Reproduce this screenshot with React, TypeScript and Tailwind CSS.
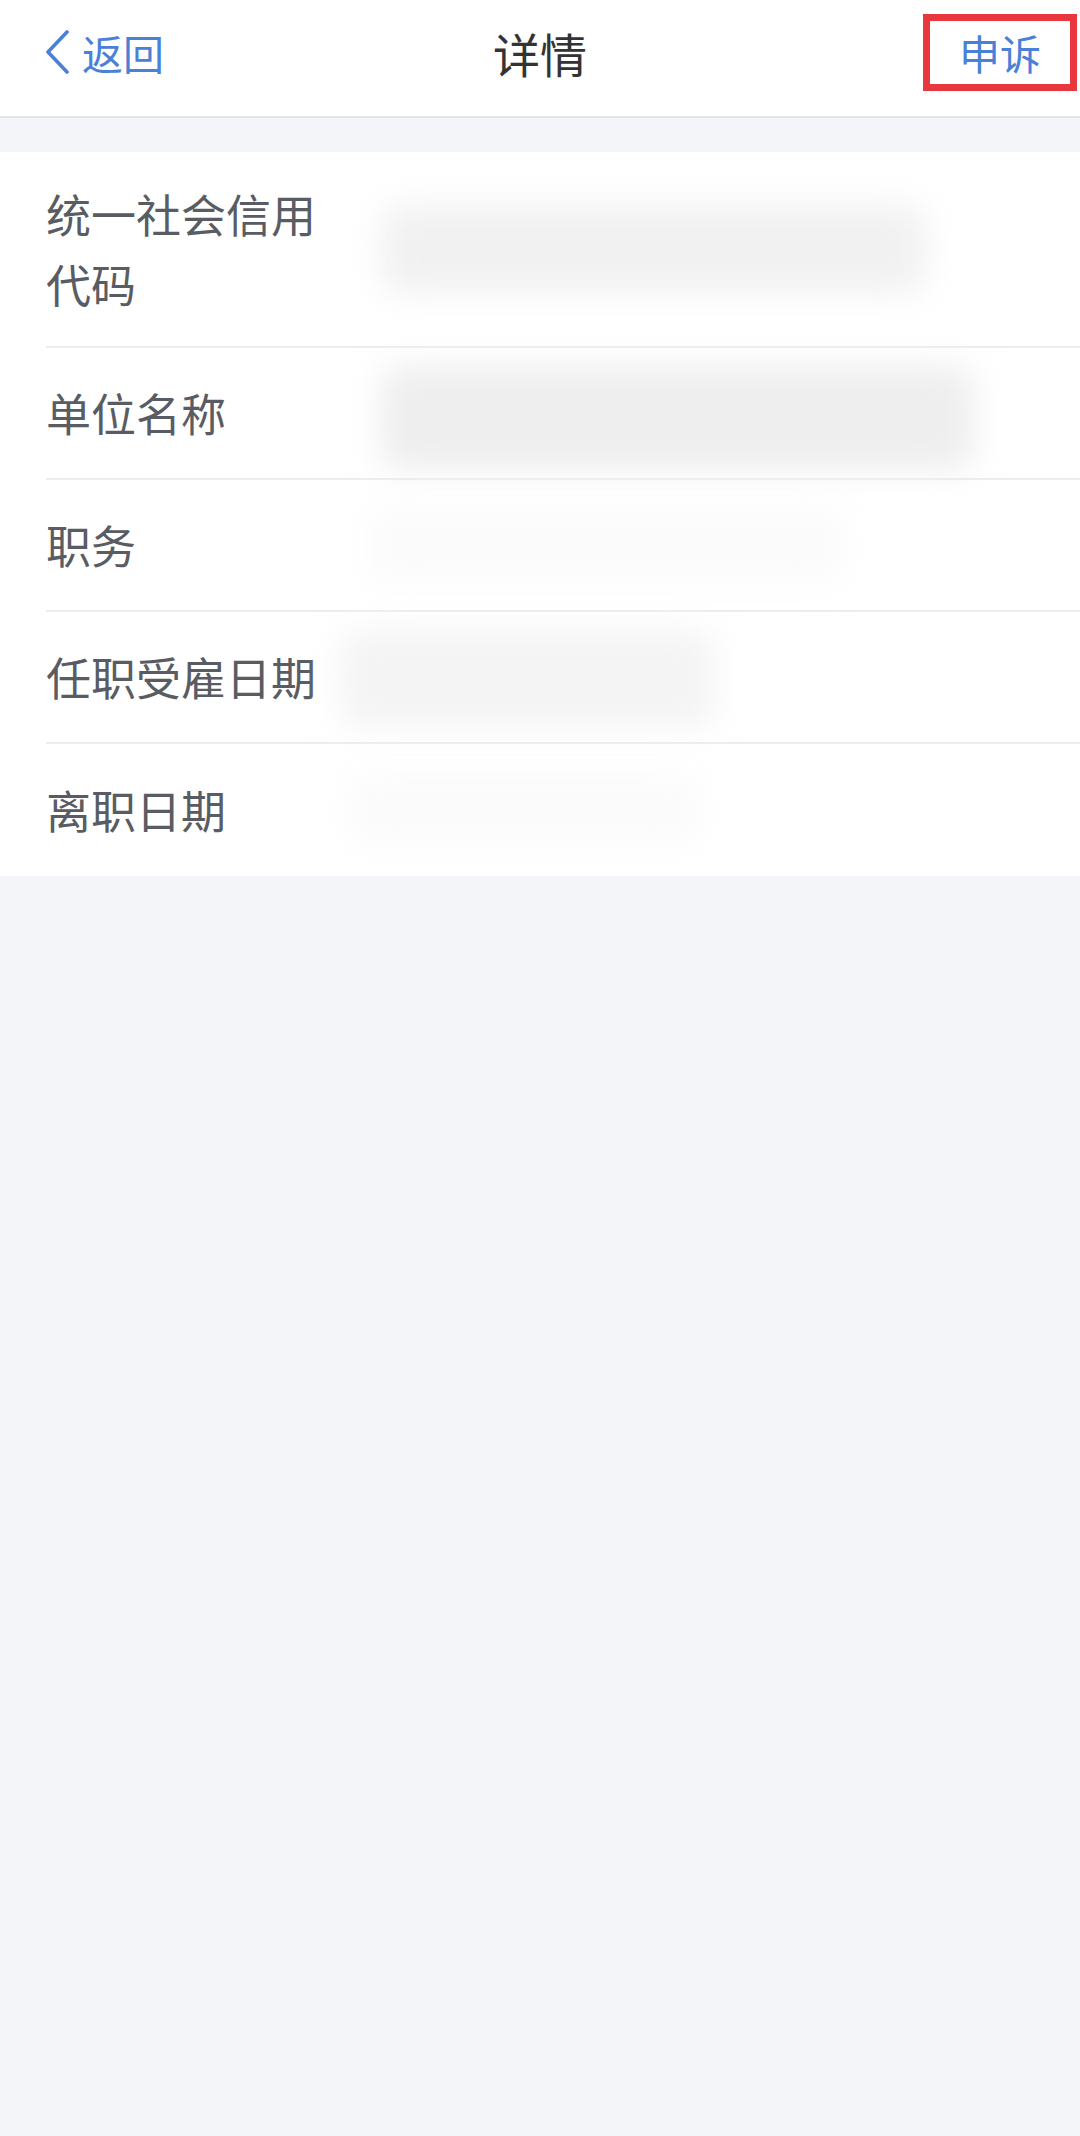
const font = { fontFamily: '"Noto Sans CJK SC", "Noto Sans", sans-serif' };

type Row = {
	label: string;
	tall?: boolean;
	blob: string;
};

const rows: Row[] = [
	{
		label: "统一社会信用代码",
		tall: true,
		blob: "ml-[45px] w-[545px] h-[88px] bg-[#f1f1f1]",
	},
	{
		label: "单位名称",
		blob: "ml-[45px] mt-[10px] w-[593px] h-[104px] bg-[#eeeeee]",
	},
	{
		label: "职务",
		blob: "ml-[32px] w-[477px] h-[74px] bg-[#fbfbfb]",
	},
	{
		label: "任职受雇日期",
		blob: "ml-[4px] mt-[4px] w-[375px] h-[96px] bg-[#f4f4f4]",
	},
	{
		label: "离职日期",
		blob: "ml-[11px] w-[354px] h-[70px] bg-[#fbfbfb]",
	},
];

export default function App() {
	return (
		<div className="min-h-[2136px] w-full bg-[#f4f5f9]" style={font}>
			{/* Top bar */}
			<header className="h-[118px] pb-[12px] bg-white border-b-2 border-[#e4e5e9] grid grid-cols-3 items-center">
				<div className="flex items-center pl-[44px] gap-[12px] text-[#4a80d8]">
					<svg width="26" height="44" viewBox="0 0 26 44" fill="none">
						<polyline
							points="23,2 4,22 23,42"
							stroke="currentColor"
							strokeWidth="3.6"
							strokeLinecap="round"
							strokeLinejoin="round"
						/>
					</svg>
					<span className="text-[41px] leading-none">返回</span>
				</div>
				<div className="text-center text-[47px] text-[#333333] leading-none">
					详情
				</div>
				<div className="flex justify-end pr-[3px]">
					<div className="w-[154px] h-[77px] border-[7px] border-[#e8383d] flex items-center justify-center text-[#4a80d8] text-[41px] leading-none">
						申诉
					</div>
				</div>
			</header>

			{/* Detail list */}
			<div className="mt-[34px] bg-white pl-[46px]">
				{rows.map((row, i) => (
					<div
						key={row.label}
						className={`flex items-center ${row.tall ? "h-[196px]" : "h-[132px]"} ${
							i < rows.length - 1 ? "border-b-2 border-[#ededef]" : ""
						}`}
					>
						<div className="w-[290px] shrink-0 text-[45px] leading-[70px] text-[#595c62]">
							{row.label}
						</div>
						<div className="flex-1 flex items-center">
							<div className={`rounded-[20px] blur-lg ${row.blob}`} />
						</div>
					</div>
				))}
			</div>
		</div>
	);
}
